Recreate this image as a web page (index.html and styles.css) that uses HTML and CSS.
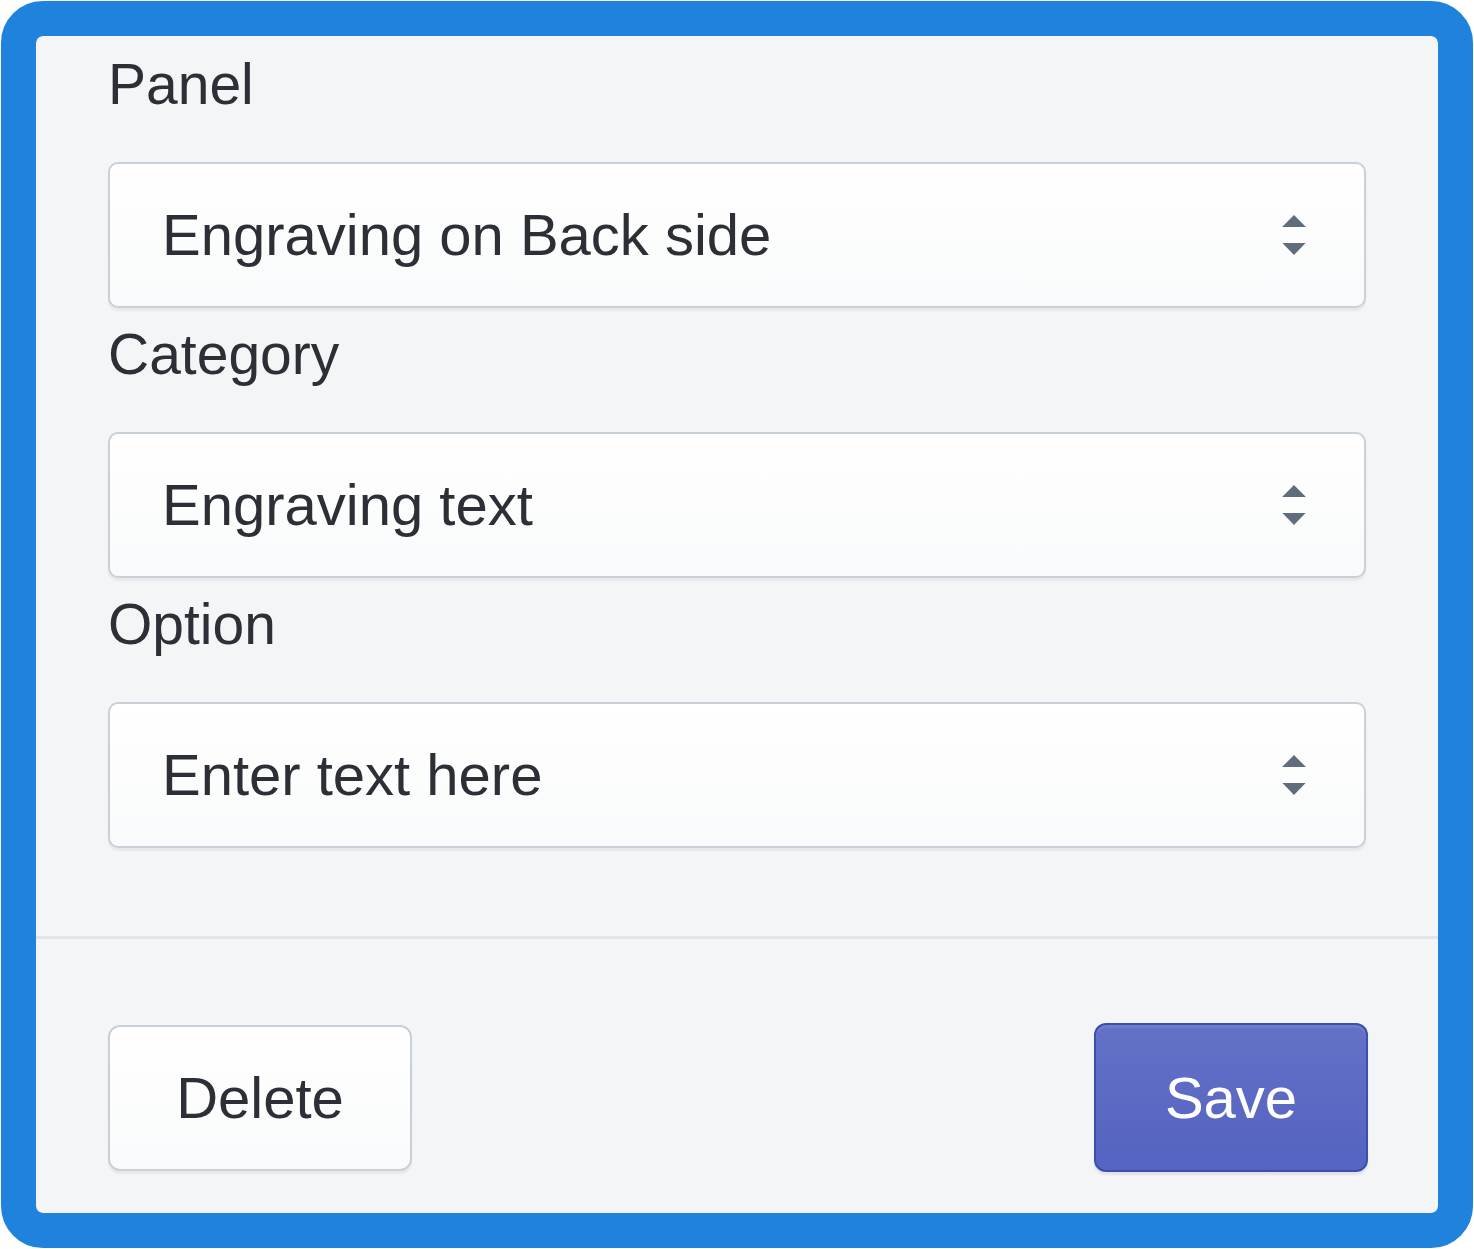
FILE: index.html
```html
<!DOCTYPE html>
<html lang="en">
<head>
<meta charset="utf-8">
<title>Panel options</title>
<link rel="stylesheet" href="styles.css">
</head>
<body>
<div class="frame">
  <div class="panel">
    <div class="form">
      <div class="field">
        <label class="label">Panel</label>
        <div class="select">
          <span class="select-text">Engraving on Back side</span>
          <svg class="arrows" viewBox="0 0 20 20"><path d="M13 8l-3-3-3 3h6zm-.1 4L10 15l-2.9-3h5.8z"/></svg>
        </div>
      </div>
      <div class="field">
        <label class="label">Category</label>
        <div class="select">
          <span class="select-text">Engraving text</span>
          <svg class="arrows" viewBox="0 0 20 20"><path d="M13 8l-3-3-3 3h6zm-.1 4L10 15l-2.9-3h5.8z"/></svg>
        </div>
      </div>
      <div class="field">
        <label class="label">Option</label>
        <div class="select">
          <span class="select-text">Enter text here</span>
          <svg class="arrows" viewBox="0 0 20 20"><path d="M13 8l-3-3-3 3h6zm-.1 4L10 15l-2.9-3h5.8z"/></svg>
        </div>
      </div>
    </div>
    <div class="divider"></div>
    <div class="footer">
      <button class="btn btn-secondary">Delete</button>
      <button class="btn btn-primary">Save</button>
    </div>
  </div>
</div>
</body>
</html>
```

FILE: styles.css
```css
html, body {
  margin: 0;
  padding: 0;
  background: #ffffff;
}

body {
  font-family: "Liberation Sans", Arial, sans-serif;
  color: #2c3036;
}

.frame {
  box-sizing: border-box;
  width: 1472px;
  height: 1247px;
  margin: 1px;
  border: 35px solid #1f82dc;
  border-radius: 42px;
  background: #1f82dc;
  overflow: hidden;
}

.panel {
  height: 100%;
  background: #f4f5f7;
  border-radius: 6px;
  display: flex;
  flex-direction: column;
}

.form {
  flex: none;
  padding: 8px 72px 82px;
}

.field {
  display: flex;
  flex-direction: column;
}

.label {
  display: block;
  font-size: 57px;
  line-height: 80px;
  height: 80px;
  margin-bottom: 38px;
  color: #2c3036;
}

.select {
  box-sizing: border-box;
  height: 146px;
  margin-bottom: 6px;
  display: flex;
  align-items: center;
  justify-content: space-between;
  padding: 0 30px 0 52px;
  border: 2px solid #c9d0d8;
  border-radius: 10px;
  background: linear-gradient(180deg, #ffffff, #f9fafb);
  box-shadow: 0 3px 2px rgba(22, 29, 37, 0.06);
}

.select-text {
  font-size: 58px;
  color: #2c3036;
  line-height: 1;
}

.arrows {
  width: 80px;
  height: 80px;
  fill: #5f6d7c;
  flex: none;
}

.divider {
  flex: none;
  height: 3px;
  background: #e1e4ea;
}

.footer {
  flex: none;
  display: flex;
  justify-content: space-between;
  align-items: center;
  padding: 84px 70px 0 72px;
}

.btn {
  box-sizing: border-box;
  font-family: "Liberation Sans", Arial, sans-serif;
  font-size: 58px;
  line-height: 1;
  border-radius: 12px;
  cursor: pointer;
  padding: 0;
}

.btn-secondary {
  width: 304px;
  height: 146px;
  color: #2c3036;
  border: 2px solid #c9d0d8;
  background: linear-gradient(180deg, #ffffff, #f9fafb);
  box-shadow: 0 3px 2px rgba(22, 29, 37, 0.06);
}

.btn-primary {
  width: 274px;
  height: 149px;
  color: #ffffff;
  border: 2px solid #3f4eae;
  background: linear-gradient(180deg, #6371c7, #5563c1);
  box-shadow: inset 0 3px 0 0 #6f7bcb, 0 3px 2px rgba(22, 29, 37, 0.08);
}
```
